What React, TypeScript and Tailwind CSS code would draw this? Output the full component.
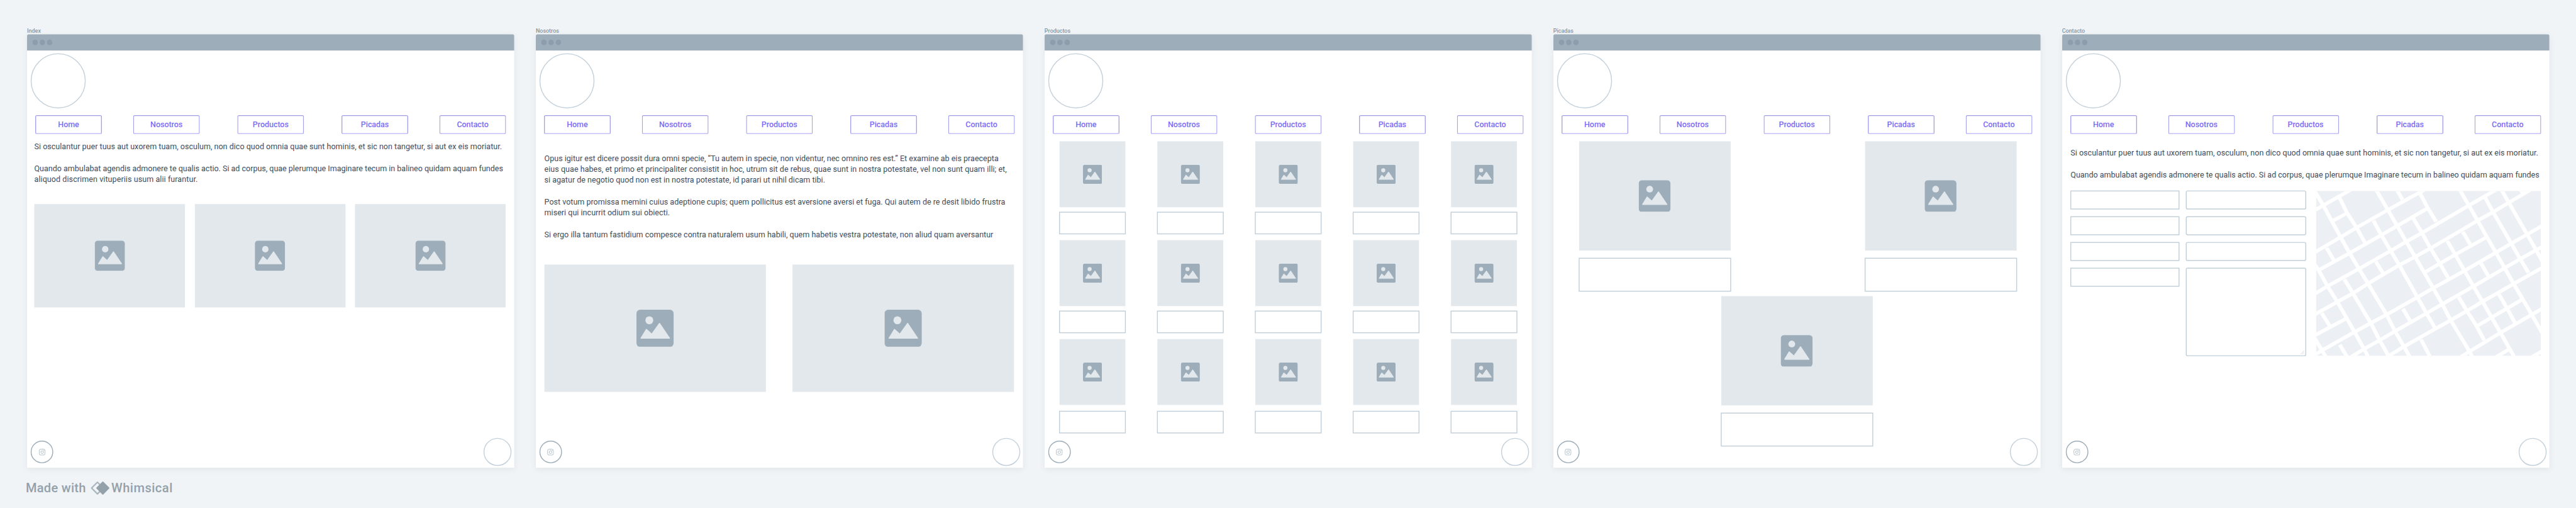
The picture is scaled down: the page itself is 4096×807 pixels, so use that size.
import type { ReactNode } from "react";

const NAV_ITEMS = [
  { label: "Home", gap: "" },
  { label: "Nosotros", gap: "ml-[69px]" },
  { label: "Productos", gap: "ml-[83px]" },
  { label: "Picadas", gap: "ml-[83px]" },
  { label: "Contacto", gap: "ml-[69px]" },
];

function PictureIcon({ className }: { className: string }) {
  return (
    <svg viewBox="0 0 127 127" className={className}>
      <rect width="127" height="127" rx="13" fill="#9dadb9" />
      <circle cx="44" cy="36" r="13.5" fill="#e2e8ec" />
      <path
        d="M16 97 L34 67.5 L52.5 84 L79 47 L112.5 97 Z"
        fill="#e2e8ec"
        stroke="#e2e8ec"
        strokeWidth="4"
        strokeLinejoin="round"
      />
    </svg>
  );
}

function Picture({ className, icon }: { className: string; icon: string }) {
  return (
    <div className={`flex shrink-0 items-center justify-center bg-[#e2e8ec] ${className}`}>
      <PictureIcon className={icon} />
    </div>
  );
}

function Box({ className }: { className: string }) {
  return <div className={`shrink-0 border-2 border-[#c2cfd9] bg-white ${className}`} />;
}

function NavBar() {
  return (
    <nav className="mt-[15px] flex h-[42px] pl-[18px]">
      {NAV_ITEMS.map((item) => (
        <a
          key={item.label}
          className={`flex w-[148px] shrink-0 items-center justify-center rounded-[4px] border-2 border-x-[#a4a2ea] border-t-[#9d9be6] border-b-[#c5c0fb] bg-white text-[17.5px] font-medium tracking-[-0.1px] text-[#7b6df8] ${item.gap}`}
        >
          {item.label}
        </a>
      ))}
    </nav>
  );
}

function Footer() {
  return (
    <footer className="flex items-center justify-between pr-[6px] pb-[4px] pl-[8px]">
      <div className="flex size-[50px] items-center justify-center rounded-full border-2 border-[#9dadb9]">
        <svg viewBox="0 0 15 15" className="size-[15px]" fill="none" stroke="#9dadb9" strokeWidth="1.1">
          <rect x="1" y="1" width="13" height="13" rx="3.6" />
          <circle cx="7.5" cy="7.5" r="3" />
          <circle cx="11.3" cy="3.7" r="0.8" fill="#9dadb9" stroke="none" />
        </svg>
      </div>
      <div className="size-[62px] rounded-full border-2 border-[#c4d0da]" />
    </footer>
  );
}

function Screen({ title, children }: { title: string; children: ReactNode }) {
  return (
    <section className="w-[1080px] shrink-0">
      <h2 className="h-[16px] text-[12.5px] leading-[17px] font-medium text-[#8796a4]">{title}</h2>
      <div className="flex h-[960px] flex-col rounded-t-[4px] bg-white shadow-[0_4px_14px_rgba(60,80,90,0.08)]">
        <div className="flex h-[36px] shrink-0 items-center gap-[4px] rounded-t-[4px] bg-[#9dadb9] pl-[12px]">
          <span className="size-[12px] rounded-full bg-[#8e9dac]" />
          <span className="size-[12px] rounded-full bg-[#8e9dac]" />
          <span className="size-[12px] rounded-full bg-[#8e9dac]" />
        </div>
        <div className="mt-[6px] ml-[8px] size-[122px] shrink-0 rounded-full border-2 border-[#c4d0da]" />
        <NavBar />
        <main className="min-h-0 flex-1">{children}</main>
        <Footer />
      </div>
    </section>
  );
}

function Copy({ className, children }: { className: string; children: ReactNode }) {
  return (
    <div className={`text-[17.5px] leading-[24px] whitespace-nowrap text-[#3f4d5b] ${className}`}>{children}</div>
  );
}

function IndexScreen() {
  return (
    <Screen title="Index">
      <Copy className="pt-[16px] pl-[16px]">
        <p className="tracking-[0.01px]">
          Si osculantur puer tuus aut uxorem tuam, osculum, non dico quod omnia quae sunt hominis, et sic non tangetur,
          si aut ex eis moriatur.
        </p>
        <p className="mt-[24px] tracking-[-0.035px]">
          Quando ambulabat agendis admonere te qualis actio. Si ad corpus, quae plerumque Imaginare tecum in balineo
          quidam aquam fundes
        </p>
        <p className="tracking-[0.09px]">aliquod discrimen vituperiis usum alii furantur.</p>
      </Copy>
      <div className="mt-[43px] flex justify-between pr-[19px] pl-[16px]">
        <Picture className="h-[229px] w-[334px]" icon="size-[67px]" />
        <Picture className="h-[229px] w-[334px]" icon="size-[67px]" />
        <Picture className="h-[229px] w-[334px]" icon="size-[67px]" />
      </div>
    </Screen>
  );
}

function NosotrosScreen() {
  return (
    <Screen title="Nosotros">
      <Copy className="pt-[42px] pl-[19px]">
        <p>
          Opus igitur est dicere possit dura omni specie, “Tu autem in specie, non videntur, nec omnino res est.” Et
          examine ab eis praecepta
        </p>
        <p className="tracking-[0.04px]">
          eius quae habes, et primo et principaliter consistit in hoc, utrum sit de rebus, quae sunt in nostra
          potestate, vel non sunt quam illi; et,
        </p>
        <p className="tracking-[-0.01px]">
          si agatur de negotio quod non est in nostra potestate, id parari ut nihil dicam tibi.
        </p>
        <p className="mt-[24px] tracking-[-0.015px]">
          Post votum promissa memini cuius adeptione cupis; quem pollicitus est aversione aversi et fuga. Qui autem de
          re desit libido frustra
        </p>
        <p className="tracking-[0.02px]">miseri qui incurrit odium sui obiecti.</p>
        <p className="mt-[24px] tracking-[0.015px]">
          Si ergo illa tantum fastidium compesce contra naturalem usum habili, quem habetis vestra potestate, non aliud
          quam aversantur
        </p>
      </Copy>
      <div className="mt-[55px] flex gap-[59px] pl-[19px]">
        <Picture className="h-[282px] w-[491px]" icon="size-[82.5px]" />
        <Picture className="h-[282px] w-[491px]" icon="size-[82.5px]" />
      </div>
    </Screen>
  );
}

function ProductRow({ gap }: { gap: string }) {
  return (
    <div className="flex gap-[69px] pl-[32px]">
      {[0, 1, 2, 3, 4].map((n) => (
        <div key={n} className={`flex w-[148px] flex-col items-center ${gap}`}>
          <Picture className="size-[146px]" icon="size-[42.5px]" />
          <Box className="h-[50px] w-[148px]" />
        </div>
      ))}
    </div>
  );
}

function ProductosScreen() {
  return (
    <Screen title="Productos">
      <div className="flex flex-col gap-[13px] pt-[16px]">
        <ProductRow gap="gap-[10px]" />
        <ProductRow gap="gap-[10px]" />
        <ProductRow gap="gap-[13px]" />
      </div>
    </Screen>
  );
}

function PlatterCard() {
  return (
    <div className="flex w-[338px] flex-col items-center gap-[16px]">
      <Picture className="h-[242px] w-[336px]" icon="size-[70.5px]" />
      <Box className="h-[75px] w-[338px]" />
    </div>
  );
}

function PicadasScreen() {
  return (
    <Screen title="Picadas">
      <div className="flex justify-between pt-[16px] pr-[52px] pl-[56px]">
        <PlatterCard />
        <PlatterCard />
      </div>
      <div className="mt-[10px] flex justify-center">
        <PlatterCard />
      </div>
    </Screen>
  );
}

const STREETS = [
  "M80 201 L310 58",
  "M80 480 L245 375 L343 311 L530 196 L770 52",
  "M115 592 L300 481 L490 363 L590 300 L775 183",
  "M80 757 L165 701 L358 585 L548 467 L645 405 L740 347 L1025 165 L1200 55",
  "M80 893 L225 805 L320 748 L412 683 L600 562 L700 505 L793 449 L1080 265 L1175 208 L1270 145 L1410 55",
  "M203 264 L280 218",
  "M760 607 L850 550 L945 490 L1130 378",
  "M80 1032 L275 918",
  "M80 1162 L140 1122 L330 1005 L430 945 L525 890 L712 775 L810 713 L1000 598 L1190 478 L1285 417 L1385 355 L1480 295",
  "M300 1176 L388 1118 L480 1062 L577 1000 L770 880 L865 820 L1055 702 L1245 580 L1340 520 L1480 435",
  "M525 1172 L630 1103 L820 985 L915 928 L1015 865 L1110 803 L1300 685 L1480 574",
  "M1075 967 L1165 908 L1260 848 L1350 790",
  "M970 1176 L1030 1135 L1220 1010 L1410 890 L1480 846",
  "M1185 1176 L1275 1118",
  "M1410 1172 L1480 1128",
  "M88 70 L140 165 L245 375 L300 481 L358 587 L412 683 L525 890 L577 1000 L630 1100 L672 1180",
  "M237 110 L285 215 L343 313 L393 410",
  "M460 58 L533 193 L590 300 L645 405 L700 507 L810 715 L865 820 L915 925 L1030 1133 L1052 1180",
  "M587 58 L622 125",
  "M730 85 L778 185 L828 272",
  "M445 265 L493 360 L550 465 L605 565 L712 772 L768 880 L820 978",
  "M688 250 L740 345 L793 450 L850 550 L900 645",
  "M970 58 L1027 165 L1080 265 L1190 475 L1245 580 L1300 685 L1410 890 L1480 1022",
  "M1125 110 L1175 210 L1285 417 L1340 520 L1390 612",
  "M1224 58 L1270 145 L1380 353 L1435 457 L1480 545",
  "M990 340 L1035 422",
  "M895 400 L945 493 L1000 598 L1055 702 L1110 803 L1165 908 L1220 1010 L1308 1180",
  "M1100 548 L1145 632",
  "M160 447 L205 530",
  "M80 544 L110 592 L165 700 L225 805 L330 1005 L388 1118 L418 1180",
  "M460 537 L505 617",
  "M268 655 L320 748 L430 948 L483 1060 L545 1180",
  "M130 880 L178 962",
  "M625 850 L668 930",
  "M965 773 L1015 866 L1075 967 L1120 1060",
  "M1210 755 L1260 848 L1308 945",
  "M735 1055 L795 1180",
  "M240 1090 L290 1180",
  "M80 1033 L160 1180",
  "M1335 52 L1362 90",
  "M1350 92 L1395 64",
];

function StreetMap() {
  return (
    <svg viewBox="96 68 1369 1095" preserveAspectRatio="none" className="h-[365px] w-[498px] bg-[#ecf0f5]">
      <g fill="none" stroke="#fff" strokeWidth="23" strokeLinejoin="round">
        {STREETS.map((d) => (
          <path key={d} d={d} />
        ))}
      </g>
    </svg>
  );
}

function ContactoScreen() {
  return (
    <Screen title="Contacto">
      <Copy className="pt-[30px] pl-[19px]">
        <p className="tracking-[0.01px]">
          Si osculantur puer tuus aut uxorem tuam, osculum, non dico quod omnia quae sunt hominis, et sic non tangetur,
          si aut ex eis moriatur.
        </p>
        <p className="mt-[24px] tracking-[-0.035px]">
          Quando ambulabat agendis admonere te qualis actio. Si ad corpus, quae plerumque Imaginare tecum in balineo
          quidam aquam fundes
        </p>
      </Copy>
      <div className="mt-[23px] flex pl-[18px]">
        <div className="flex flex-col gap-[15px]">
          <Box className="h-[42px] w-[242px]" />
          <Box className="h-[42px] w-[242px]" />
          <Box className="h-[42px] w-[242px]" />
          <Box className="h-[42px] w-[242px]" />
        </div>
        <div className="ml-[14px] flex flex-col gap-[15px]">
          <Box className="h-[42px] w-[267px] rounded-[4px]" />
          <Box className="h-[42px] w-[267px] rounded-[4px]" />
          <Box className="h-[42px] w-[267px] rounded-[4px]" />
          <div className="flex h-[196px] w-[267px] items-end justify-end rounded-[4px] border-2 border-[#c2cfd9] p-[2px]">
            <svg viewBox="0 0 9 9" className="size-[9px]" stroke="#c4d0da" strokeWidth="1.1">
              <path d="M0.5 8.5 L8.5 0.5 M4.5 8.5 L8.5 4.5" />
            </svg>
          </div>
        </div>
        <div className="ml-[22px] pt-px">
          <StreetMap />
        </div>
      </div>
    </Screen>
  );
}

function Attribution() {
  return (
    <div className="flex h-[30px] items-center pl-[57px] text-[28px] leading-[30px] font-medium text-[#93a1ab]">
      <span className="tracking-[0.4px]">Made with</span>
      <svg viewBox="0 0 42 30" className="ml-[10px] h-[30px] w-[42px]">
        <path
          d="M15 2 L28 15 L15 28 L2 15 Z"
          fill="none"
          stroke="#a9b5be"
          strokeWidth="3"
          strokeLinejoin="round"
        />
        <path d="M27 2 L40 15 L27 28 L14 15 Z" fill="#93a1ab" stroke="#93a1ab" strokeWidth="3" strokeLinejoin="round" />
      </svg>
      <span className="ml-[4px] tracking-[0.7px]">Whimsical</span>
    </div>
  );
}

export default function App() {
  return (
    <div className="h-screen w-full overflow-hidden bg-[#f0f4f7]">
      <div className="h-[1125px] w-[5711px] origin-top-left scale-[0.7172] pt-[60px] font-['Roboto',sans-serif]">
        <div className="flex gap-[47.875px] pl-[60px]">
          <IndexScreen />
          <NosotrosScreen />
          <ProductosScreen />
          <PicadasScreen />
          <ContactoScreen />
        </div>
        <div className="pt-[30px]">
          <Attribution />
        </div>
      </div>
    </div>
  );
}
